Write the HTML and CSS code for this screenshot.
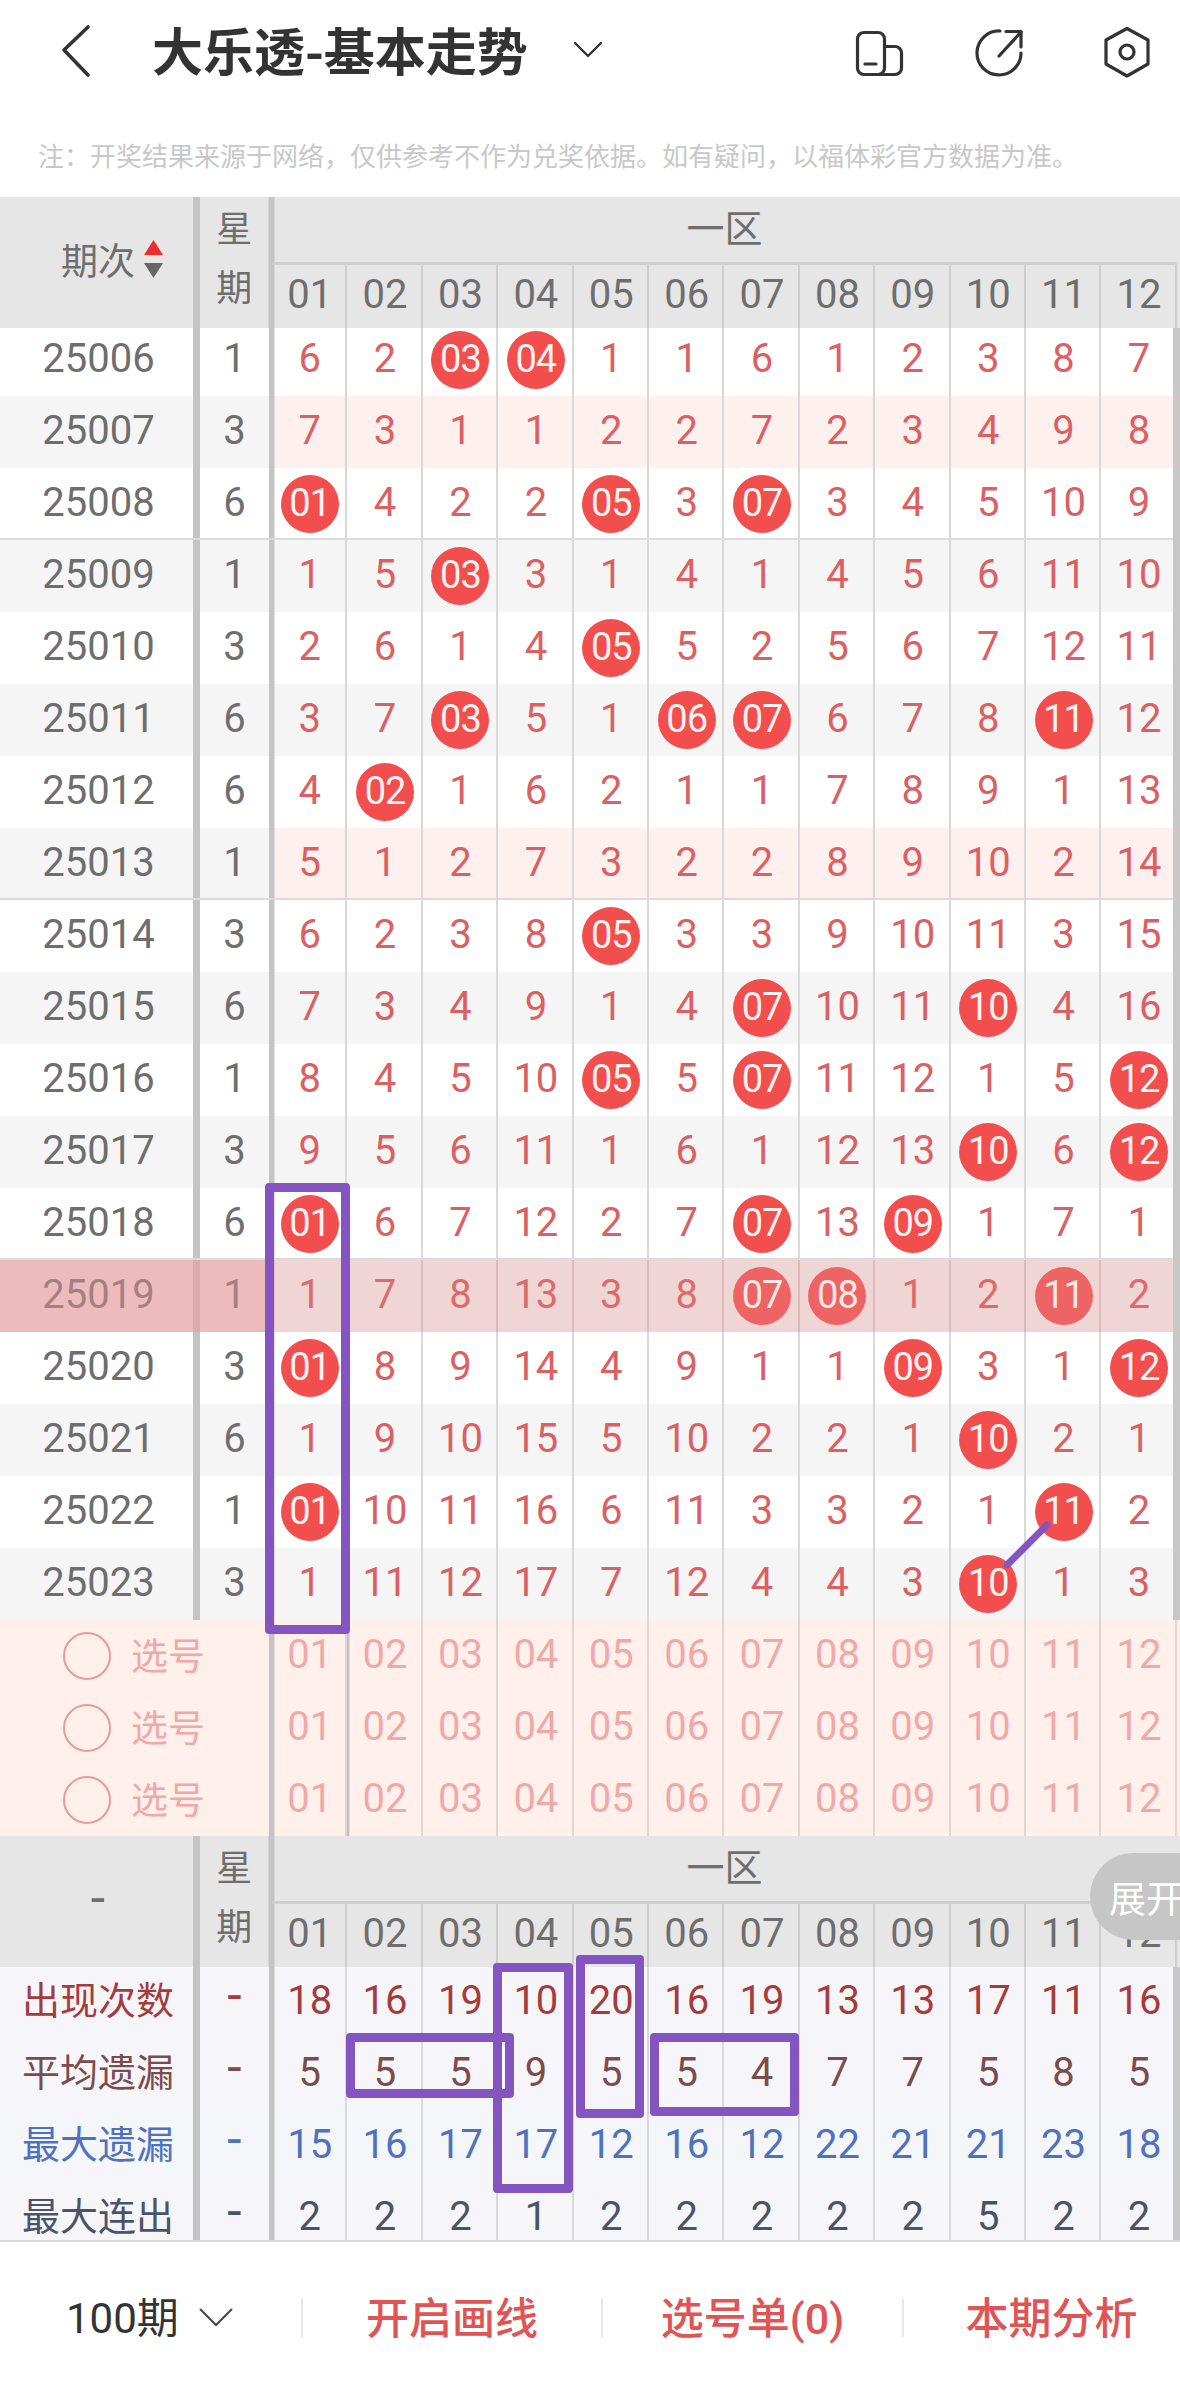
FILE: index.html
```html
<!DOCTYPE html>
<html lang="zh-CN">
<head>
<meta charset="utf-8">
<title>大乐透-基本走势</title>
<link rel="stylesheet" href="styles.css">
</head>
<body>
<div class="page">
  <header class="nav">
    <svg class="back" viewBox="0 0 30 54"><path d="M27 3 L3 26 L27 51"/></svg>
    <h1 class="title">大乐透-基本走势</h1>
    <svg class="title-chev" viewBox="0 0 28 16"><path d="M1 1 L14 14 L27 1"/></svg>
    <div class="nav-icons">
      <svg viewBox="0 0 54 60"><rect x="4.5" y="13.5" width="27" height="42" rx="6.5"/><path d="M32 27.5 H42 a6.5 6.5 0 0 1 6.5 6.5 V49 a6.5 6.5 0 0 1 -6.5 6.5 H12"/><path d="M12 45 H23"/></svg>
      <svg viewBox="0 0 54 60"><path d="M28 12 A22 22 0 1 0 49 34"/><path d="M27 37 L49 13"/><path d="M34 12.5 H49 V28"/></svg>
      <svg viewBox="0 0 54 60"><path d="M27 9.5 L48 21 V45 L27 57 L6 45 V21 Z"/><circle cx="27" cy="33" r="7"/></svg>
    </div>
  </header>
  <p class="note">注&#xFF1A;开奖结果来源于网络&#xFF0C;仅供参考不作为兑奖依据。如有疑问&#xFF0C;以福体彩官方数据为准。</p>

  <main class="table">
    <div class="head">
      <div class="head-id">期次<svg class="sort" viewBox="0 0 19 38"><polygon class="up" points="9.5,0 19,15 0,15"/><polygon class="down" points="0,23 19,23 9.5,38"/></svg></div>
      <div class="head-wk"><span>星</span><span>期</span></div>
      <div class="zone">
        <div class="zone-title">一区</div>
        <div class="cols"><span class="n">01</span><span class="n">02</span><span class="n">03</span><span class="n">04</span><span class="n">05</span><span class="n">06</span><span class="n">07</span><span class="n">08</span><span class="n">09</span><span class="n">10</span><span class="n">11</span><span class="n">12</span></div>
      </div>
    </div>

    <div class="row"><span class="id">25006</span><span class="wk">1</span><span class="n">6</span><span class="n">2</span><span class="n"><b>03</b></span><span class="n"><b>04</b></span><span class="n">1</span><span class="n">1</span><span class="n">6</span><span class="n">1</span><span class="n">2</span><span class="n">3</span><span class="n">8</span><span class="n">7</span></div>
    <div class="row pink"><span class="id">25007</span><span class="wk">3</span><span class="n">7</span><span class="n">3</span><span class="n">1</span><span class="n">1</span><span class="n">2</span><span class="n">2</span><span class="n">7</span><span class="n">2</span><span class="n">3</span><span class="n">4</span><span class="n">9</span><span class="n">8</span></div>
    <div class="row end"><span class="id">25008</span><span class="wk">6</span><span class="n"><b>01</b></span><span class="n">4</span><span class="n">2</span><span class="n">2</span><span class="n"><b>05</b></span><span class="n">3</span><span class="n"><b>07</b></span><span class="n">3</span><span class="n">4</span><span class="n">5</span><span class="n">10</span><span class="n">9</span></div>
    <div class="row gray"><span class="id">25009</span><span class="wk">1</span><span class="n">1</span><span class="n">5</span><span class="n"><b>03</b></span><span class="n">3</span><span class="n">1</span><span class="n">4</span><span class="n">1</span><span class="n">4</span><span class="n">5</span><span class="n">6</span><span class="n">11</span><span class="n">10</span></div>
    <div class="row"><span class="id">25010</span><span class="wk">3</span><span class="n">2</span><span class="n">6</span><span class="n">1</span><span class="n">4</span><span class="n"><b>05</b></span><span class="n">5</span><span class="n">2</span><span class="n">5</span><span class="n">6</span><span class="n">7</span><span class="n">12</span><span class="n">11</span></div>
    <div class="row gray"><span class="id">25011</span><span class="wk">6</span><span class="n">3</span><span class="n">7</span><span class="n"><b>03</b></span><span class="n">5</span><span class="n">1</span><span class="n"><b>06</b></span><span class="n"><b>07</b></span><span class="n">6</span><span class="n">7</span><span class="n">8</span><span class="n"><b>11</b></span><span class="n">12</span></div>
    <div class="row"><span class="id">25012</span><span class="wk">6</span><span class="n">4</span><span class="n"><b>02</b></span><span class="n">1</span><span class="n">6</span><span class="n">2</span><span class="n">1</span><span class="n">1</span><span class="n">7</span><span class="n">8</span><span class="n">9</span><span class="n">1</span><span class="n">13</span></div>
    <div class="row pink end"><span class="id">25013</span><span class="wk">1</span><span class="n">5</span><span class="n">1</span><span class="n">2</span><span class="n">7</span><span class="n">3</span><span class="n">2</span><span class="n">2</span><span class="n">8</span><span class="n">9</span><span class="n">10</span><span class="n">2</span><span class="n">14</span></div>
    <div class="row"><span class="id">25014</span><span class="wk">3</span><span class="n">6</span><span class="n">2</span><span class="n">3</span><span class="n">8</span><span class="n"><b>05</b></span><span class="n">3</span><span class="n">3</span><span class="n">9</span><span class="n">10</span><span class="n">11</span><span class="n">3</span><span class="n">15</span></div>
    <div class="row gray"><span class="id">25015</span><span class="wk">6</span><span class="n">7</span><span class="n">3</span><span class="n">4</span><span class="n">9</span><span class="n">1</span><span class="n">4</span><span class="n"><b>07</b></span><span class="n">10</span><span class="n">11</span><span class="n"><b>10</b></span><span class="n">4</span><span class="n">16</span></div>
    <div class="row"><span class="id">25016</span><span class="wk">1</span><span class="n">8</span><span class="n">4</span><span class="n">5</span><span class="n">10</span><span class="n"><b>05</b></span><span class="n">5</span><span class="n"><b>07</b></span><span class="n">11</span><span class="n">12</span><span class="n">1</span><span class="n">5</span><span class="n"><b>12</b></span></div>
    <div class="row gray"><span class="id">25017</span><span class="wk">3</span><span class="n">9</span><span class="n">5</span><span class="n">6</span><span class="n">11</span><span class="n">1</span><span class="n">6</span><span class="n">1</span><span class="n">12</span><span class="n">13</span><span class="n"><b>10</b></span><span class="n">6</span><span class="n"><b>12</b></span></div>
    <div class="row end"><span class="id">25018</span><span class="wk">6</span><span class="n"><b>01</b></span><span class="n">6</span><span class="n">7</span><span class="n">12</span><span class="n">2</span><span class="n">7</span><span class="n"><b>07</b></span><span class="n">13</span><span class="n"><b>09</b></span><span class="n">1</span><span class="n">7</span><span class="n">1</span></div>
    <div class="row hl"><span class="id">25019</span><span class="wk">1</span><span class="n">1</span><span class="n">7</span><span class="n">8</span><span class="n">13</span><span class="n">3</span><span class="n">8</span><span class="n"><b>07</b></span><span class="n"><b>08</b></span><span class="n">1</span><span class="n">2</span><span class="n"><b>11</b></span><span class="n">2</span></div>
    <div class="row"><span class="id">25020</span><span class="wk">3</span><span class="n"><b>01</b></span><span class="n">8</span><span class="n">9</span><span class="n">14</span><span class="n">4</span><span class="n">9</span><span class="n">1</span><span class="n">1</span><span class="n"><b>09</b></span><span class="n">3</span><span class="n">1</span><span class="n"><b>12</b></span></div>
    <div class="row gray"><span class="id">25021</span><span class="wk">6</span><span class="n">1</span><span class="n">9</span><span class="n">10</span><span class="n">15</span><span class="n">5</span><span class="n">10</span><span class="n">2</span><span class="n">2</span><span class="n">1</span><span class="n"><b>10</b></span><span class="n">2</span><span class="n">1</span></div>
    <div class="row"><span class="id">25022</span><span class="wk">1</span><span class="n"><b>01</b></span><span class="n">10</span><span class="n">11</span><span class="n">16</span><span class="n">6</span><span class="n">11</span><span class="n">3</span><span class="n">3</span><span class="n">2</span><span class="n">1</span><span class="n"><b>11</b></span><span class="n">2</span></div>
    <div class="row gray"><span class="id">25023</span><span class="wk">3</span><span class="n">1</span><span class="n">11</span><span class="n">12</span><span class="n">17</span><span class="n">7</span><span class="n">12</span><span class="n">4</span><span class="n">4</span><span class="n">3</span><span class="n"><b>10</b></span><span class="n">1</span><span class="n">3</span></div>

    <div class="row pick"><span class="pick-cell"><i class="radio"></i>选号</span><span class="n">01</span><span class="n">02</span><span class="n">03</span><span class="n">04</span><span class="n">05</span><span class="n">06</span><span class="n">07</span><span class="n">08</span><span class="n">09</span><span class="n">10</span><span class="n">11</span><span class="n">12</span></div>
    <div class="row pick"><span class="pick-cell"><i class="radio"></i>选号</span><span class="n">01</span><span class="n">02</span><span class="n">03</span><span class="n">04</span><span class="n">05</span><span class="n">06</span><span class="n">07</span><span class="n">08</span><span class="n">09</span><span class="n">10</span><span class="n">11</span><span class="n">12</span></div>
    <div class="row pick"><span class="pick-cell"><i class="radio"></i>选号</span><span class="n">01</span><span class="n">02</span><span class="n">03</span><span class="n">04</span><span class="n">05</span><span class="n">06</span><span class="n">07</span><span class="n">08</span><span class="n">09</span><span class="n">10</span><span class="n">11</span><span class="n">12</span></div>

    <div class="head">
      <div class="head-id head-dash">-</div>
      <div class="head-wk"><span>星</span><span>期</span></div>
      <div class="zone">
        <div class="zone-title">一区</div>
        <div class="cols"><span class="n">01</span><span class="n">02</span><span class="n">03</span><span class="n">04</span><span class="n">05</span><span class="n">06</span><span class="n">07</span><span class="n">08</span><span class="n">09</span><span class="n">10</span><span class="n">11</span><span class="n">12</span></div>
      </div>
    </div>

    <div class="row stat s1"><span class="id">出现次数</span><span class="wk">-</span><span class="n">18</span><span class="n">16</span><span class="n">19</span><span class="n">10</span><span class="n">20</span><span class="n">16</span><span class="n">19</span><span class="n">13</span><span class="n">13</span><span class="n">17</span><span class="n">11</span><span class="n">16</span></div>
    <div class="row stat s2"><span class="id">平均遗漏</span><span class="wk">-</span><span class="n">5</span><span class="n">5</span><span class="n">5</span><span class="n">9</span><span class="n">5</span><span class="n">5</span><span class="n">4</span><span class="n">7</span><span class="n">7</span><span class="n">5</span><span class="n">8</span><span class="n">5</span></div>
    <div class="row stat s3"><span class="id">最大遗漏</span><span class="wk">-</span><span class="n">15</span><span class="n">16</span><span class="n">17</span><span class="n">17</span><span class="n">12</span><span class="n">16</span><span class="n">12</span><span class="n">22</span><span class="n">21</span><span class="n">21</span><span class="n">23</span><span class="n">18</span></div>
    <div class="row stat s4"><span class="id">最大连出</span><span class="wk">-</span><span class="n">2</span><span class="n">2</span><span class="n">2</span><span class="n">1</span><span class="n">2</span><span class="n">2</span><span class="n">2</span><span class="n">2</span><span class="n">2</span><span class="n">5</span><span class="n">2</span><span class="n">2</span></div>
  </main>

  <footer class="foot">
    <div class="tab tab-period">100期<svg class="foot-chev" viewBox="0 0 34 20"><path d="M1 2 L17 18 L33 2"/></svg></div>
    <div class="tab tab-link">开启画线</div>
    <div class="tab tab-link">选号单(0)</div>
    <div class="tab tab-link tab-last">本期分析</div>
  </footer>

  <div class="mark m1"></div>
  <div class="mark m2"></div>
  <div class="mark m3"></div>
  <div class="mark m4"></div>
  <div class="mark m5"></div>
  <svg class="stroke" viewBox="0 0 50 50"><path d="M3 47 L43 7"/></svg>
  <div class="badge">展开</div>
</div>
</body>
</html>
```
FILE: styles.css
```css
* { box-sizing: border-box; }
html, body { margin: 0; padding: 0; background: #fff; }
body {
  font-family: Roboto, "Noto Sans CJK SC", sans-serif;
  color: #6e6e6e;
}
.page {
  position: relative;
  width: 1180px;
  height: 2392px;
  overflow: hidden;
  --thick: #c4c4c4;
  --thin: #d9d9d9;
}

/* nav */
.nav {
  display: flex;
  align-items: center;
  height: 98px;
  padding-left: 61px;
  padding-right: 26px;
}
.nav svg { fill: none; stroke: #333; stroke-linecap: round; stroke-linejoin: round; }
.back { width: 30px; height: 54px; stroke-width: 3.6; flex: none; margin-top: 3px; }
.title {
  margin: 0 0 0 61px;
  font-size: 51px;
  font-weight: 700;
  color: #333;
  white-space: nowrap;
  font-family: "Noto Sans CJK SC", sans-serif;
}
.title-chev { width: 28px; height: 16px; margin-left: 46px; margin-top: 2px; stroke-width: 2.4; flex: none; }
.nav-icons { margin-left: auto; display: flex; gap: 65px; }
.nav-icons svg { width: 54px; height: 60px; stroke-width: 3.2; }
.nav-icons svg:last-child { margin-left: 9px; }

.note {
  margin: 0;
  height: 99px;
  padding: 37px 0 0 38px;
  font-family: "Noto Sans CJK SC", sans-serif;
  font-size: 26px;
  line-height: 40px;
  color: #c8c8c8;
  white-space: nowrap;
}

/* table */
.table {
  position: relative;
  height: 2043px;
  overflow: hidden;
}
.table::after {
  content: "";
  position: absolute;
  top: 0; bottom: 0; right: 0;
  width: 7px;
  background: #c8c8c8;
}
.head {
  position: relative;
  z-index: 1;
  display: grid;
  grid-template-columns: 200px 72px 904.8px;
  height: 131px;
  margin-bottom: -4px;
  background: #e6e6e6;
  --thin: #cdcdcd;
}
.head-id {
  display: flex;
  align-items: center;
  padding: 0 0 7px 61px;
  gap: 9px;
  font-size: 37px;
  box-shadow: inset -7px 0 0 var(--thick);
}
.head-dash { justify-content: center; padding: 0 4px 6px 0; font-size: 52px; }
.sort { width: 19px; height: 38px; }
.sort .up { fill: #f02d2d; }
.sort .down { fill: #666; }
.head-wk {
  display: flex;
  flex-direction: column;
  align-items: center;
  justify-content: center;
  padding: 0 3.5px 6px 0;
  font-size: 36px;
  line-height: 59px;
  box-shadow: inset -3.5px 0 0 var(--thick);
}
.zone { display: flex; flex-direction: column; min-width: 0; }
.zone-title {
  height: 68px;
  padding-bottom: 9px;
  display: flex;
  align-items: center;
  justify-content: center;
  font-size: 38px;
  border-bottom: 3px solid #cfcfcf;
  box-shadow: inset 2.5px 0 0 var(--thick);
}
.cols { display: grid; grid-template-columns: repeat(12, 75.4px); flex: 1; }
.n {
  display: flex;
  align-items: center;
  justify-content: center;
  font-size: 40px;
  padding-bottom: 4px;
  box-shadow: inset -2px 0 0 var(--thin);
}
.cols .n:first-child { box-shadow: inset 2.5px 0 0 var(--thick), inset -2px 0 0 var(--thin); }

.row {
  position: relative;
  display: grid;
  grid-template-columns: 200px 72px repeat(12, 75.4px);
  height: 72px;
  background: #fff;
}
.row .n { color: #dc6062; }
.row .n:nth-child(3) { box-shadow: inset 2.5px 0 0 var(--thick), inset -2px 0 0 var(--thin); }
.id {
  display: flex;
  align-items: center;
  justify-content: center;
  padding: 0 3px 4px 0;
  font-size: 40px;
  box-shadow: inset -7px 0 0 var(--thick);
}
.wk {
  display: flex;
  align-items: center;
  justify-content: center;
  padding: 0 3px 4px 0;
  font-size: 40px;
  box-shadow: inset -3px 0 0 var(--thick);
}
.row .n b {
  display: flex;
  align-items: center;
  justify-content: center;
  width: 58px;
  height: 58px;
  margin-bottom: -4px;
  padding-bottom: 2px;
  border-radius: 50%;
  background: #f24e4e;
  color: #fff3f0;
  font-size: 38px;
  font-weight: 400;
  letter-spacing: -1px;
}
.gray { background: #f5f5f5; }
.pink { background: #f5f5f5; }
.pink .n { background: #fff0f0; }
.end::after {
  content: "";
  position: absolute;
  left: 0; right: 0; bottom: -1px;
  height: 3px;
  background: #dcdcdc;
}
.hl {
  background: #ecbcbc;
  --thick: #dcaaaa;
  --thin: #dfb9b9;
  color: #a87f7f;
}
.hl .n { background: #f0d5d5; color: #de6b6b; }
.row.hl .n b { background: #ee6464; color: #ffe9e6; }

/* pick rows */
.pick { background: #fff0ec; z-index: 1; }
.pick .n { color: #f0a9aa; --thin: #e0d6d4; }
.pick .n:nth-child(2) { box-shadow: inset 2.5px 0 0 var(--thick), inset -2px 0 0 var(--thin); }
.pick-cell {
  grid-column: span 2;
  display: flex;
  align-items: center;
  padding: 0 0 5px 63px;
  gap: 20px;
  font-size: 37px;
  color: #f0a8a8;
  box-shadow: inset -3px 0 0 var(--thick);
}
.radio {
  width: 48px;
  height: 48px;
  border: 2.5px solid #e79b9b;
  border-radius: 50%;
  flex: none;
  margin-top: 5px;
}

/* stats */
.stat { background: #f6f6fa; }
.stat .id { font-size: 38px; padding: 0 4px 4px 0; }
.row.stat .n { padding: 2px 0 0; }
.stat .wk { font-size: 52px; padding: 0 3px 8px 0; }
.row.s1 .n { color: #a53c3c; }
.s1 { color: #a53c3c; }
.s2 { color: #7b4c4c; }
.row.s2 .n { color: #7b4c4c; }
.s3 { color: #4f72c0; background: #f5f6fa; }
.row.s3 .n { color: #4f72c0; }
.s4 { color: #4b5368; background: #f6f6f8; }
.row.s4 .n { color: #4b5368; }

/* footer */
.foot {
  display: grid;
  grid-template-columns: 301px 300px 301px 278px;
  height: 152px;
  border-top: 2px solid #d9d9d9;
  padding-top: 2px;
  align-items: center;
}
.tab {
  display: flex;
  align-items: center;
  justify-content: center;
  height: 38px;
  padding-bottom: 6px;
  white-space: nowrap;
}
.tab-link {
  font-size: 43px;
  font-weight: 500;
  color: #e05454;
  border-left: 2px solid #e8e8e8;
}
.tab-last { padding-left: 19px; }
.tab-period {
  justify-content: flex-start;
  padding: 0 0 8px 66px;
  gap: 20px;
  font-size: 42px;
  color: #333;
}
.foot-chev { width: 34px; height: 20px; fill: none; stroke: #444; stroke-width: 2; flex: none; margin-top: 6px; }

/* hand-drawn overlays */
.mark {
  position: absolute;
  z-index: 2;
  border: 9px solid #8455c0;
  border-radius: 4px;
}
.m1 { left: 265px; top: 1183px; width: 85px; height: 451px; }
.m2 { left: 346px; top: 2033px; width: 168px; height: 65px; }
.m3 { left: 493px; top: 1963px; width: 80px; height: 230px; }
.m4 { left: 576px; top: 1955px; width: 68px; height: 163px; }
.m5 { left: 650px; top: 2033px; width: 149px; height: 83px; }
.stroke {
  position: absolute;
  z-index: 2;
  left: 1004px;
  top: 1518px;
  width: 50px;
  height: 50px;
  fill: none;
  stroke: #8455c0;
  stroke-width: 7;
  stroke-linecap: round;
}
.badge {
  position: absolute;
  z-index: 3;
  left: 1090px;
  top: 1853px;
  width: 130px;
  height: 87px;
  padding-left: 19px;
  display: flex;
  align-items: center;
  border-radius: 44px;
  background: #c6c6c6;
  color: #fff;
  font-size: 37px;
  white-space: nowrap;
}
```
